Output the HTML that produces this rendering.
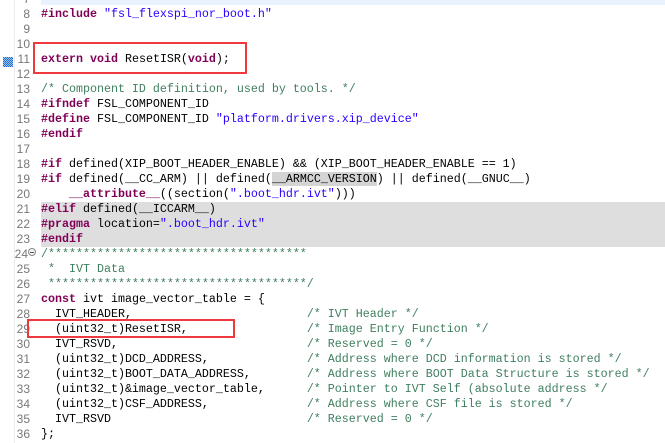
<!DOCTYPE html>
<html><head><meta charset="utf-8"><style>
html,body{margin:0;padding:0;background:#fff;width:665px;height:443px;overflow:hidden;position:relative}
.ln{position:absolute;left:14px;width:16px;text-align:right;color:#787878;font:12px/15px "Liberation Sans",sans-serif}
.code{position:absolute;left:41px;white-space:pre;font:11.67px/15px "Liberation Mono",monospace;color:#000}
.k{color:#7f0055;font-weight:bold}
.s{color:#2a00ff}
.c{color:#3f7f5f}
.band{position:absolute;left:41px;right:0}
.box{position:absolute;border:2px solid #f0393d;box-sizing:border-box}
</style></head><body>
<div class="band" style="top:0;height:5px;background:#e8f2fe"></div>
<div class="band" style="top:202px;height:45px;background:#dedede"></div>
<div style="position:absolute;left:14px;top:0;width:1px;height:443px;background:#ececec"></div>
<svg style="position:absolute;left:3px;top:57px" width="10" height="10"><defs><pattern id="p" width="2" height="2" patternUnits="userSpaceOnUse"><rect width="2" height="2" fill="#9cc3f0"/><rect width="1" height="1" fill="#1f6fd0"/><rect x="1" y="1" width="1" height="1" fill="#1f6fd0"/></pattern></defs><rect width="10" height="10" fill="url(#p)"/></svg>
<div style="position:absolute;left:28px;top:248px;width:8px;height:8px;border:1px solid #8a8a8a;border-radius:50%;box-sizing:border-box;background:#f4f4f4"><div style="position:absolute;left:1px;top:2.5px;width:4px;height:1px;background:#555"></div></div>
<div class="code" style="top:7px"><span class="k">#include</span> <span class="s">"fsl_flexspi_nor_boot.h"</span>


<span class="k">extern</span> <span class="k">void</span> ResetISR(<span class="k">void</span>);

<span class="c">/* Component ID definition, used by tools. */</span>
<span class="k">#ifndef</span> FSL_COMPONENT_ID
<span class="k">#define</span> FSL_COMPONENT_ID <span class="s">"platform.drivers.xip_device"</span>
<span class="k">#endif</span>

<span class="k">#if</span> defined(XIP_BOOT_HEADER_ENABLE) &amp;&amp; (XIP_BOOT_HEADER_ENABLE == 1)
<span class="k">#if</span> defined(__CC_ARM) || defined(<span style="background:#d4d4d4">__ARMCC_VERSION</span>) || defined(__GNUC__)
    <span class="k">__attribute__</span>((section(<span class="s">".boot_hdr.ivt"</span>)))
<span class="k">#elif</span> defined(__ICCARM__)
<span class="k">#pragma</span> location=<span class="s">".boot_hdr.ivt"</span>
<span class="k">#endif</span>
<span class="c">/*************************************</span>
<span class="c"> *  IVT Data</span>
<span class="c"> *************************************/</span>
<span class="k">const</span> ivt image_vector_table = {
  IVT_HEADER,                         <span class="c">/* IVT Header */</span>
  (uint32_t)ResetISR,                 <span class="c">/* Image Entry Function */</span>
  IVT_RSVD,                           <span class="c">/* Reserved = 0 */</span>
  (uint32_t)DCD_ADDRESS,              <span class="c">/* Address where DCD information is stored */</span>
  (uint32_t)BOOT_DATA_ADDRESS,        <span class="c">/* Address where BOOT Data Structure is stored */</span>
  (uint32_t)&amp;image_vector_table,      <span class="c">/* Pointer to IVT Self (absolute address */</span>
  (uint32_t)CSF_ADDRESS,              <span class="c">/* Address where CSF file is stored */</span>
  IVT_RSVD                            <span class="c">/* Reserved = 0 */</span>
};</div>
<div class="ln" style="top:-8px">7</div><div class="ln" style="top:7px">8</div><div class="ln" style="top:22px">9</div><div class="ln" style="top:37px">10</div><div class="ln" style="top:52px">11</div><div class="ln" style="top:67px">12</div><div class="ln" style="top:82px">13</div><div class="ln" style="top:97px">14</div><div class="ln" style="top:112px">15</div><div class="ln" style="top:127px">16</div><div class="ln" style="top:142px">17</div><div class="ln" style="top:157px">18</div><div class="ln" style="top:172px">19</div><div class="ln" style="top:187px">20</div><div class="ln" style="top:202px">21</div><div class="ln" style="top:217px">22</div><div class="ln" style="top:232px">23</div><div class="ln" style="top:247px;left:12px">24</div><div class="ln" style="top:262px">25</div><div class="ln" style="top:277px">26</div><div class="ln" style="top:292px">27</div><div class="ln" style="top:307px">28</div><div class="ln" style="top:322px">29</div><div class="ln" style="top:337px">30</div><div class="ln" style="top:352px">31</div><div class="ln" style="top:367px">32</div><div class="ln" style="top:382px">33</div><div class="ln" style="top:397px">34</div><div class="ln" style="top:412px">35</div><div class="ln" style="top:427px">36</div>
<div class="box" style="left:33px;top:42px;width:214px;height:32px"></div>
<div class="box" style="left:27px;top:319px;width:208px;height:19px"></div>
</body></html>
